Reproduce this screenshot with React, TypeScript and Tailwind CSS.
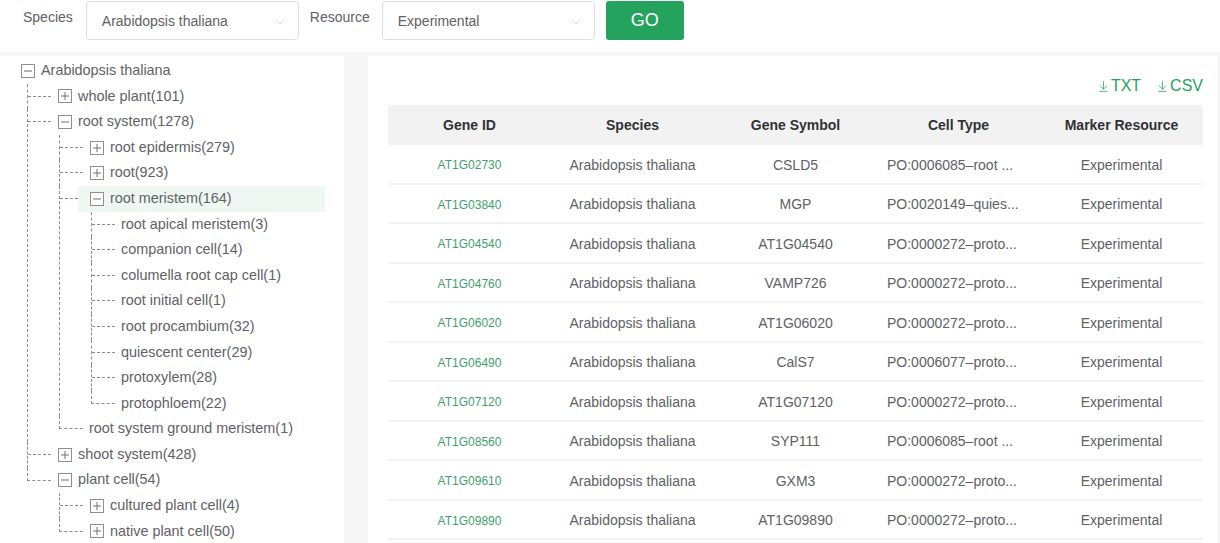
import { ArrowDownToLine, ChevronDown } from "lucide-react";

type TNode = { label: string; box?: "open" | "closed"; hl?: boolean; kids?: TNode[] };

const tree: TNode = {
  label: "Arabidopsis thaliana",
  box: "open",
  kids: [
    { label: "whole plant(101)", box: "closed" },
    {
      label: "root system(1278)",
      box: "open",
      kids: [
        { label: "root epidermis(279)", box: "closed" },
        { label: "root(923)", box: "closed" },
        {
          label: "root meristem(164)",
          box: "open",
          hl: true,
          kids: [
            { label: "root apical meristem(3)" },
            { label: "companion cell(14)" },
            { label: "columella root cap cell(1)" },
            { label: "root initial cell(1)" },
            { label: "root procambium(32)" },
            { label: "quiescent center(29)" },
            { label: "protoxylem(28)" },
            { label: "protophloem(22)" },
          ],
        },
        { label: "root system ground meristem(1)" },
      ],
    },
    { label: "shoot system(428)", box: "closed" },
    {
      label: "plant cell(54)",
      box: "open",
      kids: [
        { label: "cultured plant cell(4)", box: "closed" },
        { label: "native plant cell(50)", box: "closed" },
      ],
    },
  ],
};

const rows = [
  ["AT1G02730", "CSLD5", "PO:0006085–root ..."],
  ["AT1G03840", "MGP", "PO:0020149–quies..."],
  ["AT1G04540", "AT1G04540", "PO:0000272–proto..."],
  ["AT1G04760", "VAMP726", "PO:0000272–proto..."],
  ["AT1G06020", "AT1G06020", "PO:0000272–proto..."],
  ["AT1G06490", "CalS7", "PO:0006077–proto..."],
  ["AT1G07120", "AT1G07120", "PO:0000272–proto..."],
  ["AT1G08560", "SYP111", "PO:0006085–root ..."],
  ["AT1G09610", "GXM3", "PO:0000272–proto..."],
  ["AT1G09890", "AT1G09890", "PO:0000272–proto..."],
];

function ToggleBox({ open }: { open: boolean }) {
  return (
    <svg width="14" height="14" viewBox="0 0 14 14" className="shrink-0">
      <rect x="0.5" y="0.5" width="13" height="13" fill="white" stroke="#8f8f8f" />
      <line x1="3" y1="7" x2="11" y2="7" stroke="#707070" />
      {!open && <line x1="7" y1="3" x2="7" y2="11" stroke="#707070" />}
    </svg>
  );
}

function Row({ node }: { node: TNode }) {
  return (
    <div
      className={`flex h-[25.6px] items-center gap-[6px] whitespace-nowrap ${
        node.box ? "pl-[7px]" : "pl-[6px]"
      } ${node.hl ? "-ml-[5px] bg-[#eef7f1] pl-[12px]" : ""}`}
    >
      {node.box && <ToggleBox open={node.box === "open"} />}
      <span>{node.label}</span>
    </div>
  );
}

function Branch({ node, last }: { node: TNode; last: boolean }) {
  return (
    <div className="flex">
      <div className={`w-[24px] shrink-0 ${last ? "" : "border-l border-dashed border-[#8c8c8c]"}`}>
        <div className={`h-[13px] border-b border-dashed border-[#8c8c8c] ${last ? "border-l" : ""}`} />
      </div>
      <div className="min-w-0 flex-1">
        <Row node={node} />
        {node.box === "open" && node.kids && (
          <div className="ml-[8px]">
            {node.kids.map((k, i) => (
              <Branch key={k.label} node={k} last={i === node.kids!.length - 1} />
            ))}
          </div>
        )}
      </div>
    </div>
  );
}

function Select({ value }: { value: string }) {
  return (
    <div className="flex h-[39px] w-[213px] items-center justify-between rounded-[4px] border border-[#dcdfe6] bg-white pl-[15px] pr-[11px] pt-[2px] text-[14px] text-[#606266]">
      <span>{value}</span>
      <ChevronDown size={14} strokeWidth={1.2} className="text-[#c0c4cc]" />
    </div>
  );
}

export default function App() {
  return (
    <div className="h-[543px] overflow-hidden bg-[#f7f7f7] font-['Liberation_Sans',Arial,sans-serif] text-[#606266]">
      {/* filter bar */}
      <div className="flex h-[52px] items-start bg-white pl-[23px] pt-[1px] text-[14px]">
        <span className="mt-[6px] mr-[13px]">Species</span>
        <Select value="Arabidopsis thaliana" />
        <span className="mt-[6px] ml-[11px] mr-[12px]">Resource</span>
        <Select value="Experimental" />
        <button className="ml-[11px] h-[39px] w-[78px] rounded-[3px] bg-[#23a35d] text-[18px] text-white">
          GO
        </button>
      </div>

      <div className="flex pt-[4px]">
        {/* tree */}
        <div className="h-[487px] w-[344px] shrink-0 bg-white pt-[2px] text-[14.4px]">
          <div className="w-[325px] pl-[14px]">
            <Row node={tree} />
            <div className="ml-[13px]">
              {tree.kids!.map((k, i) => (
                <Branch key={k.label} node={k} last={i === tree.kids!.length - 1} />
              ))}
            </div>
          </div>
        </div>

        {/* table */}
        <div className="ml-[24px] mr-[3px] h-[487px] flex-1 bg-white pl-[20px] pr-[14px] pt-[21px]">
          <div className="flex h-[18px] items-center justify-end gap-[15px] text-[16px] text-[#1fa35c]">
            <span className="flex items-center gap-[1px]">
              <ArrowDownToLine size={13} strokeWidth={1.4} />
              TXT
            </span>
            <span className="flex items-center gap-[1px]">
              <ArrowDownToLine size={13} strokeWidth={1.4} />
              CSV
            </span>
          </div>
          <div className="mt-[10px] text-[14px]">
            <div className="grid h-[40px] grid-cols-5 items-center bg-[#f2f2f2] text-center font-bold text-[#303133]">
              <div>Gene ID</div>
              <div>Species</div>
              <div>Gene Symbol</div>
              <div>Cell Type</div>
              <div>Marker Resource</div>
            </div>
            {rows.map(([id, sym, cell]) => (
              <div
                key={id}
                className="grid h-[39.5px] grid-cols-5 items-center border-b-2 border-[#f2f3f5] pt-[3px] text-center"
              >
                <div className="text-[12px] text-[#3f9f6f]">{id}</div>
                <div>Arabidopsis thaliana</div>
                <div>{sym}</div>
                <div className="truncate px-[10px] text-left">{cell}</div>
                <div>Experimental</div>
              </div>
            ))}
          </div>
        </div>
      </div>
    </div>
  );
}
